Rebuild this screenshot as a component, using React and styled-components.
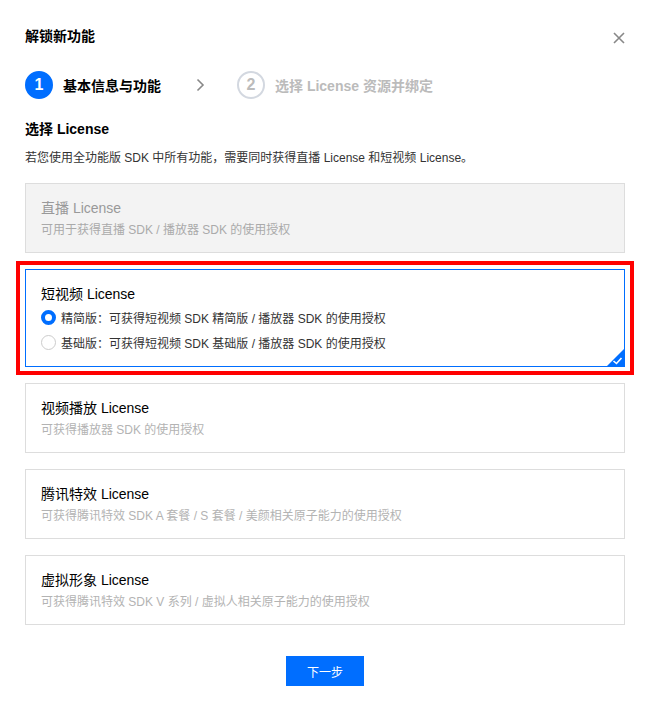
import React, { useState } from 'react'
import styled, { createGlobalStyle } from 'styled-components'

const GlobalStyle = createGlobalStyle`
  body {
    margin: 0;
    background: #fff;
    font-family: "Liberation Sans", "Noto Sans CJK SC", sans-serif;
    color: #000;
  }
`

const licenses = [
  { id: 'live', title: '直播 License', desc: '可用于获得直播 SDK / 播放器 SDK 的使用授权', disabled: true },
  {
    id: 'ugc',
    title: '短视频 License',
    options: [
      '精简版：可获得短视频 SDK 精简版 / 播放器 SDK 的使用授权',
      '基础版：可获得短视频 SDK 基础版 / 播放器 SDK 的使用授权',
    ],
  },
  { id: 'player', title: '视频播放 License', desc: '可获得播放器 SDK 的使用授权' },
  { id: 'effect', title: '腾讯特效 License', desc: '可获得腾讯特效 SDK A 套餐 / S 套餐 / 美颜相关原子能力的使用授权' },
  { id: 'avatar', title: '虚拟形象 License', desc: '可获得腾讯特效 SDK V 系列 / 虚拟人相关原子能力的使用授权' },
]

const App = () => {
  const [selected, setSelected] = useState('ugc')
  const [edition, setEdition] = useState(0)

  return (
    <Dialog>
      <GlobalStyle />
      <Header>
        <Title>解锁新功能</Title>
        <CloseButton aria-label="close">
          <svg width="12" height="12" viewBox="0 0 12 12">
            <path d="M1 1L11 11M11 1L1 11" stroke="#888" strokeWidth="1.6" />
          </svg>
        </CloseButton>
      </Header>

      <Steps>
        <Step>
          <StepNum $active>1</StepNum>
          <StepLabel $active>基本信息与功能</StepLabel>
        </Step>
        <StepArrow>
          <svg width="10" height="14" viewBox="0 0 10 14">
            <path d="M2.5 1.5L8 7L2.5 12.5" fill="none" stroke="#888" strokeWidth="1.6" />
          </svg>
        </StepArrow>
        <Step>
          <StepNum>2</StepNum>
          <StepLabel>选择 License 资源并绑定</StepLabel>
        </Step>
      </Steps>

      <SectionTitle>选择 License</SectionTitle>
      <Hint>若您使用全功能版 SDK 中所有功能，需要同时获得直播 License 和短视频 License。</Hint>

      <CardList>
        {licenses.map(l => {
          const active = selected === l.id
          return (
            <Card
              key={l.id}
              $disabled={l.disabled}
              $active={active}
              onClick={() => !l.disabled && setSelected(l.id)}
            >
              <CardTitle $disabled={l.disabled}>{l.title}</CardTitle>
              {l.desc && <CardDesc $disabled={l.disabled}>{l.desc}</CardDesc>}
              {l.options && (
                <Options>
                  {l.options.map((o, i) => (
                    <Option key={o} onClick={() => setEdition(i)}>
                      <Radio $checked={edition === i} />
                      {o}
                    </Option>
                  ))}
                </Options>
              )}
              {active && (
                <>
                  <Corner viewBox="0 0 17 17">
                    <polygon points="17,0 17,17 0,17" fill="#006eff" />
                    <path d="M6.5 12L9.5 14.5L14.5 9" fill="none" stroke="#fff" strokeWidth="1.6" />
                  </Corner>
                  <Highlight />
                </>
              )}
            </Card>
          )
        })}
      </CardList>

      <Footer>
        <PrimaryButton>下一步</PrimaryButton>
      </Footer>
    </Dialog>
  )
}

export default App

const Dialog = styled.div`
  width: 650px;
  box-sizing: border-box;
  padding: 25px 25px 25px;
`

const Header = styled.div`
  display: flex;
  align-items: center;
  justify-content: space-between;
  height: 22px;
`

const Title = styled.div`
  font-size: 14px;
  font-weight: 700;
  line-height: 22px;
  color: #000;
`

const CloseButton = styled.button`
  display: flex;
  align-items: center;
  justify-content: center;
  width: 12px;
  height: 12px;
  padding: 0;
  margin-top: 3px;
  border: none;
  background: none;
  cursor: pointer;
`

const Steps = styled.div`
  display: flex;
  align-items: center;
  margin-top: 24px;
  height: 28px;
`

const Step = styled.div`
  display: flex;
  align-items: center;
  gap: 10px;
`

const StepNum = styled.div`
  width: 28px;
  height: 28px;
  box-sizing: border-box;
  border-radius: 50%;
  display: flex;
  align-items: center;
  justify-content: center;
  font-size: 16px;
  font-weight: 700;
  background: ${p => (p.$active ? '#006eff' : '#fff')};
  border: 2px solid ${p => (p.$active ? '#006eff' : '#d3d8e0')};
  color: ${p => (p.$active ? '#fff' : '#bbb')};
`

const StepLabel = styled.div`
  font-size: 14px;
  font-weight: 700;
  color: ${p => (p.$active ? '#000' : '#bbb')};
`

const StepArrow = styled.div`
  display: flex;
  align-items: center;
  justify-content: center;
  width: 10px;
  margin: 0 32px 0 34px;
`

const SectionTitle = styled.div`
  margin-top: 20px;
  font-size: 14px;
  font-weight: 700;
  line-height: 20px;
`

const Hint = styled.div`
  margin-top: 9px;
  font-size: 12px;
  line-height: 20px;
  color: #333;
`

const CardList = styled.div`
  display: flex;
  flex-direction: column;
  gap: 16px;
  margin-top: 15px;
`

const Card = styled.div`
  position: relative;
  box-sizing: border-box;
  padding: 14px 15px 12px;
  border: 1px solid ${p => (p.$active ? '#006eff' : '#ddd')};
  background: ${p => (p.$disabled ? '#f3f3f3' : '#fff')};
  cursor: ${p => (p.$disabled ? 'not-allowed' : 'pointer')};
`

const CardTitle = styled.div`
  font-size: 14px;
  line-height: 20px;
  color: ${p => (p.$disabled ? '#999' : '#000')};
`

const CardDesc = styled.div`
  margin-top: 2px;
  font-size: 12px;
  line-height: 20px;
  color: ${p => (p.$disabled ? '#aaa' : '#b3b3b3')};
`

const Options = styled.div`
  display: flex;
  flex-direction: column;
  gap: 3px;
  margin-top: 2px;
  padding-bottom: 1px;
`

const Option = styled.label`
  display: flex;
  align-items: center;
  height: 22px;
  font-size: 12px;
  color: #333;
  cursor: pointer;
`

const Radio = styled.span`
  width: 15px;
  height: 15px;
  box-sizing: border-box;
  border-radius: 50%;
  margin-right: 5px;
  background: #fff;
  border: ${p => (p.$checked ? '4px solid #006eff' : '1px solid #ccc')};
`

const Corner = styled.svg`
  position: absolute;
  right: 0;
  bottom: 0;
  width: 17px;
  height: 17px;
`

const Highlight = styled.div`
  position: absolute;
  top: -9px;
  left: -10px;
  right: -10px;
  bottom: -9px;
  border: 4px solid #f00;
  pointer-events: none;
`

const Footer = styled.div`
  display: flex;
  justify-content: center;
  margin-top: 31px;
`

const PrimaryButton = styled.button`
  width: 78px;
  height: 30px;
  border: none;
  background: #006eff;
  color: #fff;
  font-family: inherit;
  font-size: 12px;
  cursor: pointer;
`
